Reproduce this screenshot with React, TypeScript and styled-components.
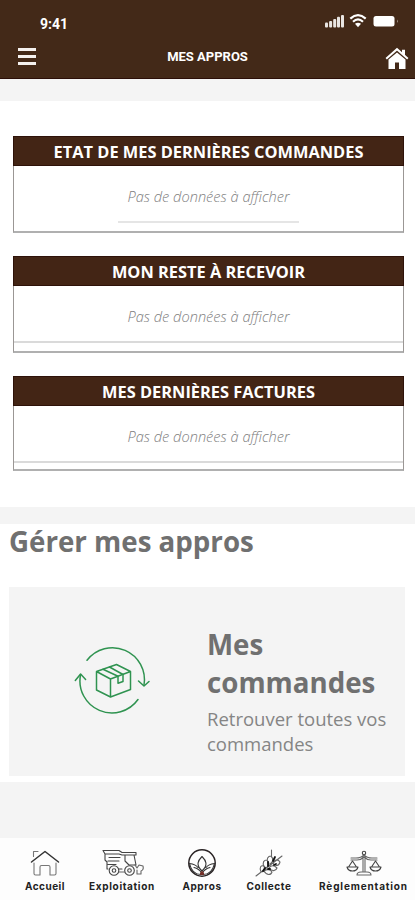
import React from "react";
import styled, { createGlobalStyle } from "styled-components";

const Global = createGlobalStyle`
  * { box-sizing: border-box; }
  body { margin: 0; background: #fff; font-family: "Open Sans", sans-serif; }
`;

const Screen = styled.div`
  width: 415px;
  height: 900px;
  display: flex;
  flex-direction: column;
  overflow: hidden;
  background: #f4f4f4;
`;

const Header = styled.header`
  height: 79px;
  flex: none;
  background: #432918;
  border-bottom: 1px solid #2c0f08;
  color: #fff;
  margin-bottom: 22px;
`;

const StatusBar = styled.div`
  height: 38px;
  display: flex;
  justify-content: space-between;
  padding: 0 16px 0 40px;
`;

const Time = styled.span`
  font: 700 14px/18px Roboto, sans-serif;
  padding-top: 15px;
`;

const StatusIcons = styled.div`
  padding-top: 12px;
`;

const TitleBar = styled.div`
  height: 40px;
  display: grid;
  grid-template-columns: 60px 1fr 60px;
`;

const MenuButton = styled.button`
  all: unset;
  display: flex;
  flex-direction: column;
  gap: 4px;
  padding: 10px 0 0 18px;
`;

const MenuLine = styled.span`
  width: 18px;
  height: 3px;
  background: #f5f1ef;
`;

const PageTitle = styled.h1`
  margin: 0;
  text-align: center;
  font: 700 13px/38px Roboto, sans-serif;
`;

const HomeButton = styled.button`
  all: unset;
  display: flex;
  justify-content: flex-end;
  align-items: flex-start;
  padding: 9px 6px 0 0;
`;

const Summary = styled.main`
  height: 406px;
  flex: none;
  background: #fff;
  padding: 35px 11px 0 13px;
  display: flex;
  flex-direction: column;
  gap: 23px;
  margin-bottom: 17px;
`;

const Panel = styled.section<{ $height: number }>`
  height: ${(p) => p.$height}px;
  display: flex;
  flex-direction: column;
  border: 1px solid #9b9795;
  border-bottom-width: 2px;
  border-bottom-color: #b0b0b0;
`;

const PanelTitle = styled.h2`
  margin: -1px -1px 0;
  height: 30px;
  background: #432515;
  border: 1px solid #2e1209;
  color: #fff;
  text-align: center;
  font-size: 16.4px;
  line-height: 30px;
  font-weight: 700;
  white-space: nowrap;
`;

const Empty = styled.p`
  margin: 0;
  height: 54px;
  padding-top: 18px;
  text-align: center;
  font-size: 14.6px;
  line-height: 24px;
  font-style: italic;
  font-weight: 300;
  color: #808080;
`;

const Rule = styled.div<{ $short?: boolean }>`
  width: ${(p) => (p.$short ? "181px" : "100%")};
  height: 2px;
  margin: 1px auto 0;
  background: ${(p) => (p.$short ? "#e5e5e5" : "#dadada")};
`;

const Manage = styled.section`
  height: 258px;
  flex: none;
  background: #fff;
  padding: 0 10px 6px 9px;
`;

const ManageTitle = styled.h2`
  margin: 0;
  height: 63px;
  color: #707070;
  font-size: 27.7px;
  line-height: 34px;
  font-weight: 700;
  white-space: nowrap;
`;

const Card = styled.article`
  height: 189px;
  background: #f4f4f4;
  display: grid;
  grid-template-columns: 198px 1fr;
`;

const CardArt = styled.div`
  padding: 57px 0 0 64px;
`;

const CardText = styled.div`
  padding-top: 38px;
`;

const CardTitle = styled.h3`
  margin: 0;
  color: #707070;
  font-size: 27.7px;
  line-height: 38px;
  font-weight: 700;
`;

const CardNote = styled.p`
  margin: 5px 0 0;
  color: #858585;
  font-size: 18.5px;
  line-height: 25px;
`;

const Nav = styled.nav`
  height: 62px;
  flex: none;
  margin-top: auto;
  background: #fdfdfd;
  display: grid;
  grid-template-columns: 42px 112px 48px 86px 103px;
  padding-left: 24px;
`;

const NavItem = styled.a`
  display: flex;
  flex-direction: column;
  align-items: center;
  color: #222;
  padding-top: 10px;
`;

const NavLabel = styled.span<{ $spacing: number }>`
  font: 700 10px/14px Inter, sans-serif;
  letter-spacing: ${(p) => p.$spacing}px;
  margin-top: 1px;
  white-space: nowrap;
`;

const Line = styled.svg`
  display: block;
  fill: none;
  stroke: #444;
  stroke-width: 1.1;
  stroke-linecap: round;
  stroke-linejoin: round;
`;

const StatusGlyphs = () => (
  <svg width="76" height="16" viewBox="0 0 76 16" fill="#fff">
    <g fill="#e9e5e2">
      <rect x="2" y="9.5" width="3" height="5" rx="1" />
      <rect x="6.1" y="8" width="3" height="6.5" rx="1" />
      <rect x="10.2" y="6" width="3" height="8.5" rx="1" />
      <rect x="14" y="3.8" width="3" height="10.7" rx="1" />
      <rect x="18" y="2" width="3" height="12.5" rx="1" />
    </g>
    <g fill="none" stroke="#fff" strokeWidth="2.2">
      <path d="M27.3 5.6Q35 -1.2 42.7 5.6" />
      <path d="M30 8.7Q35 4.2 40 8.7" />
    </g>
    <path d="M32 10.8Q35 8.5 38 10.8L35 14.2Z" />
    <rect x="50.5" y="3" width="21" height="10.5" rx="2.5" />
    <path d="M74 6.5q1.8 1.7 0 3.6z" opacity=".6" />
  </svg>
);

const HomeGlyph = () => (
  <svg width="24" height="23" viewBox="0 0 24 23" fill="#fff">
    <path d="M3.5 12.6 12 5.4l8.5 7.2V22h-6.5v-6.5h-4V22H3.5z" />
    <path d="M1.2 11.8 12 2.2l10.8 9.6" fill="none" stroke="#fff" strokeWidth="2" />
    <path d="M17 2.7h3v6l-3-2.7z" />
  </svg>
);

const OrdersGlyph = () => (
  <svg width="78" height="70" viewBox="0 0 78 70" fill="none" stroke="#2f9350" strokeWidth="1.5" strokeLinecap="round" strokeLinejoin="round">
    <path d="M14 16.3A32 32 0 0 1 71 41" />
    <path d="m65.5 37 5.5 5 5-4.5" />
    <path d="M65 55.5A32 32 0 0 1 7.500 31" />
    <path d="m2.3 36.5 5.3-6.5 5 5.5" />
    <path d="m23.5 27.5 20-7 14 7-20 7.5zM23.5 27.5V46l14 7V35M57.5 27.5v18l-20 7.5" />
    <path d="m30 25.2 15 7v7l5-1.7v-7L36.5 23" />
  </svg>
);

const HouseGlyph = () => (
  <Line width="32" height="30" viewBox="0 0 32 30">
    <path d="M2.5 14 16 3.5 29.5 14" stroke="#333" strokeWidth="1.5" />
    <path d="M4.5 8.5V3.5H9M5 15v10.5q0 1.5 1.5 1.5H11v-8q0-1.5 1.5-1.5h7q1.5 0 1.5 1.5v8h4.5q1.5 0 1.5-1.5V15" stroke="#777" />
  </Line>
);

const HarvesterGlyph = () => (
  <Line width="46" height="30" viewBox="0 0 46 30">
    <path d="M4 2.5h16l3 2H37v2.500H23l-3-1H6zM6 6v6l2 2v7H9M10 9.500h11M9 13h11M9 16.500h8M26 7v6l4 4h7M35 7l2 10M20 21h3" />
    <circle cx="15" cy="22.5" r="4.8" />
    <circle cx="15" cy="22.5" r="1.8" />
    <circle cx="30.5" cy="22.5" r="4.8" />
    <circle cx="30.5" cy="22.5" r="1.8" />
    <path d="M20 24h5.5M36 17l2 3 2-3 4 1q1 4-2 5v3h-4v-4" stroke="#666" />
  </Line>
);

const LeafGlyph = () => (
  <Line width="32" height="30" viewBox="0 0 32 30">
    <circle cx="16" cy="15" r="13.2" stroke="#292324" strokeWidth="1.5" />
    <path d="M16 23C9.5 17 12 12.5 16 8.5c4 4 6.5 8.5 0 14.5zM16 26.5C9 27 5 22 3.5 15.5c4.5.5 7 2 8.5 4M16 26.5c7 .5 11-4.5 12.5-11-4.5.5-7 2-8.5 4M8 19.5q5 1 8 6 3-5 8-6" stroke="#333" />
    <path d="M14 25q2-4 4 0v2h-4z" fill="#722e26" stroke="none" />
  </Line>
);

const WheatGlyph = () => (
  <Line width="28" height="30" viewBox="0 0 28 30">
    <path d="M1 28 27 8M16.5 8V2M6 24c-2-5 0-7 3-6 3 3 1 6-3 6zM9 19c-2-5 0-7 3-7 3 3 2 6-1 8M13 15c-2-4 0-7 3-7 3 3 2 6-1 8M9 23c3 5 7 4 8 1-2-3-5-3-8-1zM14 20c3 4 7 3 8 0-3-3-6-3-8 0zM18 15c2 4 6 3 7-1-2-3-5-3-7 1z" stroke="#666" />
    <path d="m8 23 2-3M13 18v-4M18 13l2-4M13 21h2M19 17l2-1" stroke="#111" strokeWidth="1.8" />
  </Line>
);

const ScalesGlyph = () => (
  <Line width="36" height="30" viewBox="0 0 36 30">
    <circle cx="18" cy="5" r="1.7" />
    <path d="M17 8v16M19 8v16M5 10h5q5 0 8-3 3 3 8 3h5M5 12h6q4 0 7-3 3 3 7 3h6M11 27q0-3 4-3h6q4 0 4 3z" stroke="#666" />
    <path d="m6.5 13-4 6h8zM1 19h11q-1 4-5.5 4T1 19zM29.5 13l-4 6h8zM24 19h11q-1 4-5.5 4T24 19z" />
  </Line>
);

const panels = [
  { title: "ETAT DE MES DERNIÈRES COMMANDES", height: 97, short: true },
  { title: "MON RESTE À RECEVOIR", height: 97, short: false },
  { title: "MES DERNIÈRES FACTURES", height: 95, short: false },
];

const links = [
  { label: "Accueil", Icon: HouseGlyph, spacing: 0.5 },
  { label: "Exploitation", Icon: HarvesterGlyph, spacing: 0.65 },
  { label: "Appros", Icon: LeafGlyph, spacing: 0.6 },
  { label: "Collecte", Icon: WheatGlyph, spacing: 0.6 },
  { label: "Règlementation", Icon: ScalesGlyph, spacing: 0.85 },
];

export default function App() {
  return (
    <Screen>
      <Global />
      <Header>
        <StatusBar>
          <Time>9:41</Time>
          <StatusIcons><StatusGlyphs /></StatusIcons>
        </StatusBar>
        <TitleBar>
          <MenuButton aria-label="Menu"><MenuLine /><MenuLine /><MenuLine /></MenuButton>
          <PageTitle>MES APPROS</PageTitle>
          <HomeButton aria-label="Accueil"><HomeGlyph /></HomeButton>
        </TitleBar>
      </Header>
      <Summary>
        {panels.map((p) => (
          <Panel key={p.title} $height={p.height}>
            <PanelTitle>{p.title}</PanelTitle>
            <Empty>Pas de données à afficher</Empty>
            <Rule $short={p.short} />
          </Panel>
        ))}
      </Summary>
      <Manage>
        <ManageTitle>Gérer mes appros</ManageTitle>
        <Card>
          <CardArt><OrdersGlyph /></CardArt>
          <CardText>
            <CardTitle>Mes commandes</CardTitle>
            <CardNote>Retrouver toutes vos commandes</CardNote>
          </CardText>
        </Card>
      </Manage>
      <Nav>
        {links.map(({ label, Icon, spacing }) => (
          <NavItem key={label}>
            <Icon />
            <NavLabel $spacing={spacing}>{label}</NavLabel>
          </NavItem>
        ))}
      </Nav>
    </Screen>
  );
}
